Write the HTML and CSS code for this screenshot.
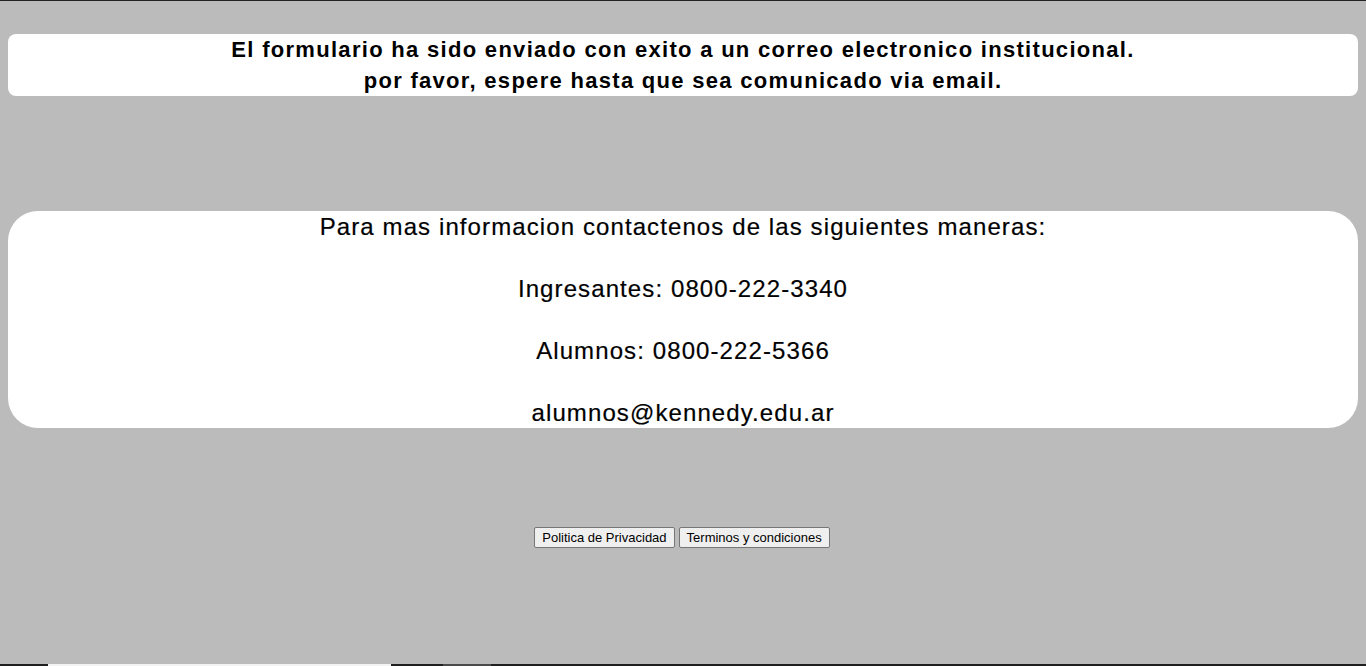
FILE: index.html
```html
<!DOCTYPE html>
<html lang="es">
<head>
<meta charset="utf-8">
<title>Formulario enviado</title>
<link rel="stylesheet" href="styles.css">
</head>
<body>
<div class="topline"></div>
<main class="page">
  <section class="box notice">
    El formulario ha sido enviado con exito a un correo electronico institucional.<br>
    por favor, espere hasta que sea comunicado via email.
  </section>
  <section class="box contact">
    Para mas informacion contactenos de las siguientes maneras:<br><br>
    Ingresantes: 0800-222-3340<br><br>
    Alumnos: 0800-222-5366<br><br>
    alumnos@kennedy.edu.ar
  </section>
  <div class="links">
    <button class="btn" type="button">Politica de Privacidad</button>
    <button class="btn" type="button">Terminos y condiciones</button>
  </div>
</main>
<div class="taskbar">
  <span class="seg dark s1"></span>
  <span class="seg light s2"></span>
  <span class="seg dark s3"></span>
  <span class="seg mid s4"></span>
  <span class="seg dark s5"></span>
</div>
</body>
</html>
```
FILE: styles.css
```css
html, body {
  margin: 0;
  padding: 0;
  background: #bbbbbb;
  height: 100%;
  overflow: hidden;
}
body {
  font-family: "Liberation Sans", Arial, sans-serif;
  color: #000;
}
.topline {
  height: 1px;
  background: #222222;
}
.page {
  padding: 33px 8px 0;
  display: flex;
  flex-direction: column;
}
.box {
  background: #ffffff;
  text-align: center;
  line-height: 31px;
}
.notice {
  border-radius: 8px;
  font-size: 22px;
  font-weight: bold;
  letter-spacing: 1.3px;
}
.contact {
  margin-top: 115px;
  border-radius: 30px;
  font-size: 24px;
  letter-spacing: 1.1px;
  -webkit-text-stroke: 0.2px #000;
}
.links {
  margin-top: 99px;
  display: flex;
  justify-content: center;
  gap: 4px;
  margin-left: -2px;
}
.btn {
  font-family: "Liberation Sans", Arial, sans-serif;
  font-size: 13px;
  height: 21px;
  padding: 1px 7px;
  background: #efefef;
  border: 1px solid #767676;
  border-radius: 2px;
  color: #000;
}
.taskbar {
  position: fixed;
  left: 0;
  right: 0;
  bottom: 0;
  height: 2px;
  display: flex;
}
.seg { height: 2px; }
.dark { background: #1f1f1f; }
.light { background: #f3f3f3; }
.mid { background: #4a4a4a; }
.s1 { width: 48px; }
.s2 { width: 343px; }
.s3 { width: 52px; }
.s4 { width: 48px; }
.s5 { flex: 1; }
```
